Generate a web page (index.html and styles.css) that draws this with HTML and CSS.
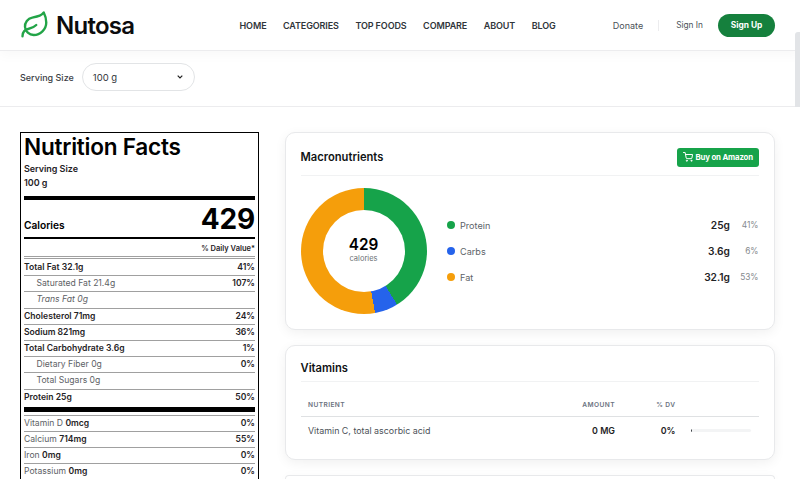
FILE: index.html
```html
<!DOCTYPE html>
<html lang="en">
  <head>
    <meta charset="UTF-8" />
    <meta name="viewport" content="width=device-width, initial-scale=1.0" />
    <title>Nutosa - Nutrition Facts</title>
    <link rel="stylesheet" href="styles.css">
  </head>
  <body>
    <header class="header">
      <a href="#" class="logo">
        <svg class="logo-icon" viewBox="0 0 24 24" fill="none" stroke="#22a447" stroke-width="1.9" stroke-linecap="round" stroke-linejoin="round">
          <path d="M11 20A7 7 0 0 1 9.8 6.1C15.5 5 17 4.48 19 2c1 2 2 4.18 2 8 0 5.5-4.78 10-10 10Z" />
          <path d="M2 21c0-3 1.85-5.36 5.08-6C9.5 14.52 12 13 13 12" />
        </svg>
        <span>Nutosa</span>
      </a>
      <nav class="nav">
        <a href="#">HOME</a>
        <a href="#">CATEGORIES</a>
        <a href="#">TOP FOODS</a>
        <a href="#">COMPARE</a>
        <a href="#">ABOUT</a>
        <a href="#">BLOG</a>
      </nav>
      <div class="account">
        <a href="#" class="donate">Donate</a>
        <a href="#" class="sign-in">Sign In</a>
        <a href="#" class="sign-up">Sign Up</a>
      </div>
    </header>

    <div class="serving-bar">
      <span>Serving Size</span>
      <button class="serving-select">
        100 g
        <svg width="6" height="4" viewBox="0 0 6 4" fill="none" stroke="#222" stroke-width="1.2"><path d="M0.7 0.7L3 3L5.3 0.7" /></svg>
      </button>
    </div>

    <main class="content">
      <!-- Nutrition label -->
      <section class="label">
        <h1>Nutrition Facts</h1>
        <p class="serving">Serving Size</p>
        <p class="serving">100 g</p>
        <div class="calories">
          <span>Calories</span>
          <strong>429</strong>
        </div>
        <div class="daily">% Daily Value*</div>
        <div class="row first"><b>Total Fat 32.1g</b><b>41%</b></div>
        <div class="row sub"><span>Saturated Fat 21.4g</span><b>107%</b></div>
        <div class="row sub"><i>Trans Fat 0g</i></div>
        <div class="row"><b>Cholesterol 71mg</b><b>24%</b></div>
        <div class="row"><b>Sodium 821mg</b><b>36%</b></div>
        <div class="row"><b>Total Carbohydrate 3.6g</b><b>1%</b></div>
        <div class="row sub"><span>Dietary Fiber 0g</span><b>0%</b></div>
        <div class="row sub"><span>Total Sugars 0g</span></div>
        <div class="row"><b>Protein 25g</b><b>50%</b></div>
        <div class="thick"></div>
        <div class="row"><span>Vitamin D <b>0mcg</b></span><b>0%</b></div>
        <div class="row"><span>Calcium <b>714mg</b></span><b>55%</b></div>
        <div class="row"><span>Iron <b>0mg</b></span><b>0%</b></div>
        <div class="row"><span>Potassium <b>0mg</b></span><b>0%</b></div>
      </section>

      <div class="cards">
        <section class="card macros">
          <div class="card-head">
            <h2>Macronutrients</h2>
            <a href="#" class="buy">
              <svg width="10" height="10" viewBox="0 0 24 24" fill="none" stroke="#fff" stroke-width="2.4" stroke-linecap="round" stroke-linejoin="round">
                <circle cx="9" cy="21" r="1.2" /><circle cx="20" cy="21" r="1.2" />
                <path d="M1 1h4l2.7 13.4a2 2 0 0 0 2 1.6h9.7a2 2 0 0 0 2-1.6L23 6H6" />
              </svg>
              Buy on Amazon
            </a>
          </div>
          <div class="macro-body">
            <div class="donut">
              <div class="donut-hole">
                <strong>429</strong>
                <span>calories</span>
              </div>
            </div>
            <ul class="legend">
              <li><span class="dot protein"></span>Protein<b>25g</b><em>41%</em></li>
              <li><span class="dot carbs"></span>Carbs<b>3.6g</b><em>6%</em></li>
              <li><span class="dot fat"></span>Fat<b>32.1g</b><em>53%</em></li>
            </ul>
          </div>
        </section>

        <section class="card vitamins">
          <div class="card-head">
            <h2>Vitamins</h2>
          </div>
          <div class="v-row v-head">
            <span>NUTRIENT</span><span>AMOUNT</span><span>% DV</span>
          </div>
          <div class="v-row">
            <span>Vitamin C, total ascorbic acid</span><b>0 MG</b><b>0%</b>
            <div class="bar"><div class="bar-fill"></div></div>
          </div>
        </section>

        <section class="card next"></section>
      </div>
    </main>
    <div class="scroll-thumb"></div>
  </body>
</html>
```
FILE: styles.css
```css
* {
  box-sizing: border-box;
  margin: 0;
  padding: 0;
}

body {
  font-family: Inter, "Liberation Sans", sans-serif;
  font-size: 9px;
  color: #1f2326;
  background: #fff;
  height: 479px;
  overflow: hidden;
}

a {
  color: inherit;
  text-decoration: none;
}

/* Header */
.header {
  display: flex;
  align-items: center;
  height: 51px;
  padding: 0 25px 0 20px;
  border-bottom: 1px solid #ececee;
  box-shadow: 0 4px 12px rgba(0, 0, 0, 0.03);
}
.logo {
  display: flex;
  align-items: center;
  gap: 6px;
  width: 219.5px;
  font-size: 24px;
  font-weight: 600;
  letter-spacing: -0.75px;
  color: #0b0c0e;
}
.logo-icon {
  width: 30px;
  height: 30px;
}
.nav {
  display: flex;
  gap: 16.5px;
  font-size: 9px;
  font-weight: 600;
  letter-spacing: -0.1px;
  padding-top: 1px;
  color: #30353a;
}
.account {
  display: flex;
  align-items: center;
  margin-left: auto;
  color: #4b5157;
}
.donate {
  padding-right: 15px;
  border-right: 1px solid #ececee;
}
.sign-in {
  padding: 0 15px 0 17px;
  font-size: 8.3px;
}
.sign-up {
  width: 57px;
  height: 23px;
  line-height: 23px;
  border-radius: 12px;
  background: #15803d;
  color: #fff;
  font-size: 8.4px;
  font-weight: 700;
  text-align: center;
}

/* Serving size */
.serving-bar {
  display: flex;
  align-items: center;
  gap: 8px;
  height: 56px;
  padding: 0 20px 3px;
  border-bottom: 1px solid #ececee;
  color: #3b4045;
  font-weight: 500;
}
.serving-select {
  display: flex;
  align-items: center;
  justify-content: space-between;
  width: 113px;
  height: 28px;
  padding: 0 11px 0 10px;
  border: 1px solid #e2e4e6;
  border-radius: 14px;
  background: #fff;
  color: #30353a;
  font: 9.5px Inter, sans-serif;
}

/* Page columns */
.content {
  display: flex;
  align-items: flex-start;
  gap: 25.5px;
  padding: 25px 25.5px 0 20px;
}
.label {
  width: 239px;
  height: 347px;
  padding: 0 3px;
  border: 1px solid #000;
  border-bottom: 0;
  font-size: 8.6px;
  overflow: hidden;
}
.label h1 {
  height: 28px;
  font-size: 22.6px;
  font-weight: 600;
  letter-spacing: -0.25px;
  line-height: 28px;
  color: #000;
}
.label b {
  font-weight: 600;
}
.serving {
  font-size: 9px;
  font-weight: 600;
  letter-spacing: -0.04px;
  line-height: 14px;
}
.serving:first-of-type {
  padding-top: 1px;
}
.calories {
  display: flex;
  justify-content: space-between;
  align-items: flex-end;
  height: 43px;
  margin-top: 6px;
  border-top: 4px solid #000;
  border-bottom: 2px solid #000;
  color: #000;
}
.calories span {
  padding-bottom: 6px;
  font-size: 10.2px;
  font-weight: 600;
  line-height: 12px;
}
.calories strong {
  align-self: flex-start;
  font-size: 28px;
  font-weight: 700;
  letter-spacing: -0.2px;
  line-height: 39px;
}
.daily {
  height: 17.2px;
  font-size: 7.5px;
  font-weight: 600;
  line-height: 19px;
  text-align: right;
}
.row {
  display: flex;
  justify-content: space-between;
  height: 16.2px;
  border-top: 1px solid #a0a0a0;
  line-height: 15px;
}
.row.first {
  height: 19px;
  border-top: 3px double #a0a0a0;
  line-height: 16px;
}
.row.sub {
  padding-left: 12.5px;
}
.row span,
.row i {
  color: #5d6165;
}
.row span b {
  color: #1f2326;
}
.thick {
  height: 5px;
  margin: 2.6px 0;
  background: #000;
}

/* Cards */
.cards {
  flex: 1;
}
.card {
  margin-bottom: 15px;
  padding: 0 15px;
  border: 1px solid #e8e9eb;
  border-radius: 10px;
  background: #fff;
  box-shadow: 0 3px 12px rgba(0, 0, 0, 0.06);
}
.card-head {
  display: flex;
  justify-content: space-between;
  align-items: center;
  border-bottom: 1px solid #f1f2f3;
}
.card h2 {
  font-size: 11.2px;
  font-weight: 600;
  color: #111315;
}
.macros {
  height: 198px;
}
.macros .card-head {
  height: 43px;
  padding-top: 6px;
}
.buy {
  display: flex;
  align-items: center;
  gap: 3px;
  width: 82px;
  height: 19px;
  padding-left: 6px;
  border-radius: 3px;
  background: #16a34a;
  color: #fff;
  font-size: 7.8px;
  font-weight: 700;
  letter-spacing: -0.16px;
  white-space: nowrap;
}
.macro-body {
  display: flex;
  align-items: center;
  gap: 20px;
  padding-top: 12px;
}
.donut {
  display: flex;
  align-items: center;
  justify-content: center;
  width: 126px;
  height: 126px;
  border-radius: 50%;
  background: conic-gradient(#16a34a 0 41.2%, #2563eb 41.2% 47.2%, #f59e0b 47.2%);
}
.donut-hole {
  display: flex;
  flex-direction: column;
  align-items: center;
  justify-content: center;
  width: 82px;
  height: 82px;
  padding-bottom: 2px;
  border-radius: 50%;
  background: #fff;
}
.donut-hole strong {
  font-size: 15.3px;
  font-weight: 600;
  line-height: 17px;
  color: #000;
}
.donut-hole span {
  font-size: 7.5px;
  line-height: 11px;
  color: #6b7075;
}
.legend {
  flex: 1;
  list-style: none;
}
.legend li {
  display: flex;
  align-items: center;
  height: 26px;
  font-size: 9.1px;
  color: #5d6368;
}
.dot {
  width: 8px;
  height: 8px;
  margin-right: 5.5px;
  border-radius: 50%;
}
.protein {
  background: #16a34a;
}
.carbs {
  background: #2563eb;
}
.fat {
  background: #f59e0b;
}
.legend b {
  margin-left: auto;
  font-size: 10.2px;
  font-weight: 600;
  color: #1f2326;
}
.legend em {
  width: 28.5px;
  font-size: 8.3px;
  font-style: normal;
  text-align: right;
  color: #85898d;
}

/* Vitamins table */
.vitamins {
  height: 115px;
}
.vitamins .card-head {
  height: 36px;
  padding-top: 8px;
}
.v-row {
  display: grid;
  grid-template-columns: 220px 87px 60.5px 60px;
  align-items: center;
  height: 27px;
  padding-left: 7.5px;
  font-size: 8.9px;
  color: #4b5157;
}
.v-row > :nth-child(2),
.v-row > :nth-child(3) {
  text-align: right;
}
.v-row b {
  font-weight: 600;
  color: #1f2326;
}
.v-head {
  height: 35px;
  padding-top: 11px;
  border-bottom: 1px solid #dfe1e3;
  font-size: 6.6px;
  font-weight: 600;
  letter-spacing: 0.42px;
  color: #6b7280;
}
.bar {
  height: 3px;
  margin-left: 15.5px;
  width: 60px;
  border-radius: 2px;
  background: #f3f4f5;
  overflow: hidden;
}
.bar-fill {
  width: 1px;
  height: 3px;
  background: #30353a;
}
.next {
  height: 4px;
  margin-bottom: 0;
  border-bottom: 0;
  border-radius: 10px 10px 0 0;
}

/* Page scrollbar */
.scroll-thumb {
  position: absolute;
  top: 32px;
  right: 0;
  width: 5px;
  height: 75px;
  border-radius: 3px 0 0 0;
  background: #e2e4e7;
}
```
